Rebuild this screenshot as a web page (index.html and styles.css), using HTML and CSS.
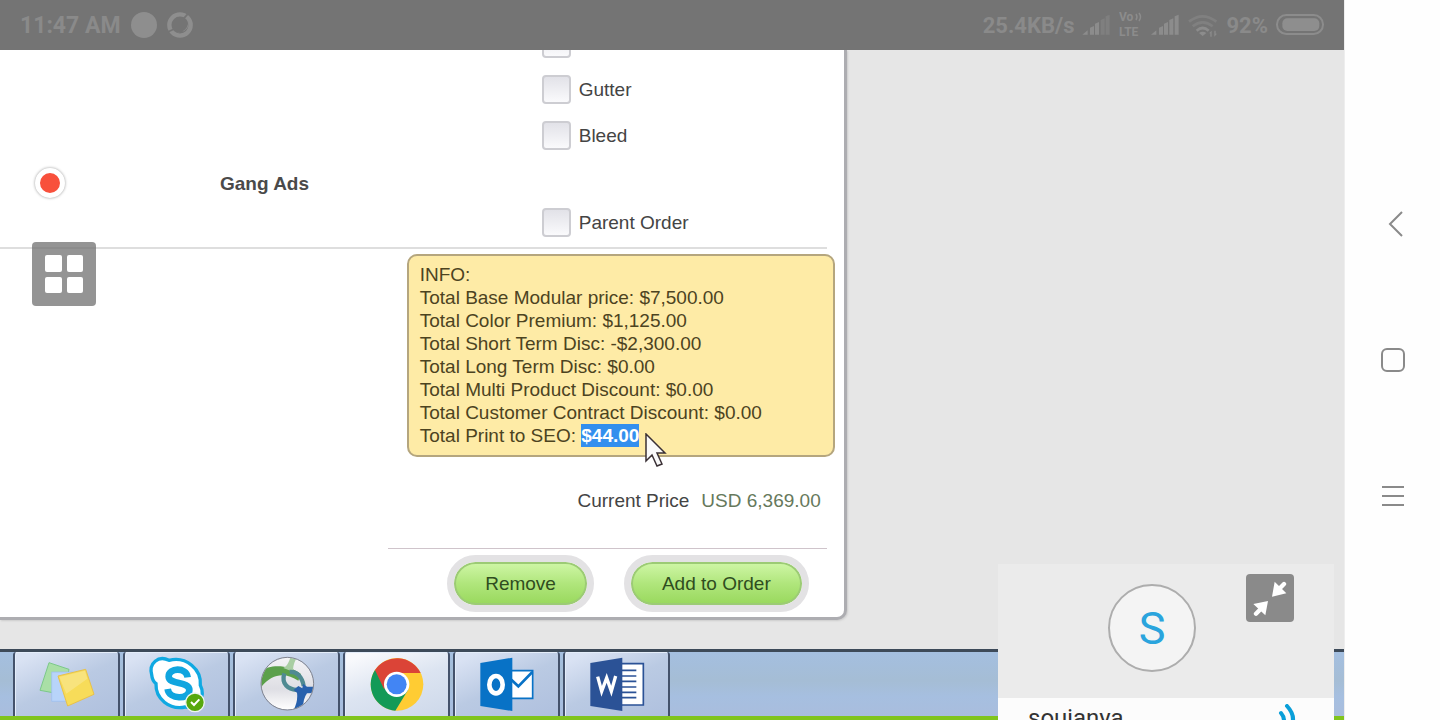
FILE: index.html
```html
<!DOCTYPE html>
<html lang="en">
<head>
<meta charset="utf-8">
<title>Order entry – shared screen</title>
<link rel="stylesheet" href="styles.css">
</head>
<body>
<div class="screen">
  <header class="statusbar">
    <div class="status-group status-left">
      <span>11:47 AM</span>
      <span class="status-dot"></span>
      <svg width="26" height="26" viewBox="498 36 78 78"><circle cx="537" cy="75" r="32" fill="none" stroke="#8e8e8e" stroke-width="13"/><path d="M556 54a28 28 0 0 1-36 40c30 12 56-18 36-40z" fill="#8e8e8e"/><path d="M548 56L562 40M500 96L518 88" stroke="#747474" stroke-width="5"/></svg>
    </div>
    <div class="status-group status-right">
      <span>25.4KB/s</span>
      <svg width="29" height="30" viewBox="357 30 87 90"><g fill="#8c8c8c"><path d="M358 104l16-13v13zM381 83l12-5v26h-12zM396 71l12-5v38h-12z"/><path fill="#7f7f7f" d="M413 60l12-5v49h-12zM428 49l12-5v60h-12z"/></g></svg>
      <svg width="24" height="30" viewBox="0 0 24 30"><text x="0" y="11" class="volte-text">Vo</text><text x="0" y="26" class="volte-text">LTE</text><path d="M17 4q2 3 0 6M20 3q3 4 0 8" fill="none" stroke="#8c8c8c" stroke-width="1.5"/></svg>
      <svg width="29" height="30" viewBox="570 30 87 90"><path fill="#8c8c8c" d="M570 104l16-13v13zM594 83l12-5v26h-12zM609 71l12-5v38h-12zM625 60l12-5v49h-12zM641 49l12-5v60h-12z"/></svg>
      <svg width="30" height="30" viewBox="685 30 90 90"><g fill="none" stroke-width="8"><path d="M688 65q41-32 82 0" stroke="#808080"/><path d="M699 79q30-24 60 0" stroke="#808080"/><path d="M711 92q18-16 36 0" stroke="#8c8c8c"/></g><path d="M718 99q11-8 22 0l-11 9zM748 100l8-8v18h-4v-10zM772 101l-8 9V92h4v9z" fill="#8c8c8c"/></svg>
      <span>92%</span>
      <svg width="48" height="30" viewBox="948 30 144 90"><rect x="951" y="45" width="138" height="57" rx="28" fill="none" stroke="#8c8c8c" stroke-width="6"/><rect x="967" y="55" width="111" height="38" rx="15" fill="#8e8e8e"/></svg>
    </div>
  </header>

  <main class="desktop">
    <form class="panel">
      <div class="options">
        <strong class="option-title">Gang Ads</strong>
        <div class="checks">
          <label class="check"><input type="checkbox" aria-label="Option"></label>
          <label class="check"><input type="checkbox">Gutter</label>
          <label class="check"><input type="checkbox">Bleed</label>
          <label class="check check-last"><input type="checkbox">Parent Order</label>
        </div>
      </div>
      <hr class="rule">
      <section class="info">
        <div>INFO:</div>
        <div>Total Base Modular price: $7,500.00</div>
        <div>Total Color Premium: $1,125.00</div>
        <div>Total Short Term Disc: -$2,300.00</div>
        <div>Total Long Term Disc: $0.00</div>
        <div>Total Multi Product Discount: $0.00</div>
        <div>Total Customer Contract Discount: $0.00</div>
        <div>Total Print to SEO: <span class="selected">$44.00<svg class="cursor" width="24" height="36" viewBox="0 0 24 36"><path d="M1 1v27l6-6 5 11 5-2-5-11h8z" fill="#fafafa" stroke="#3a3035" stroke-width="1.500"/></svg></span></div>
      </section>
      <div class="price"><span>Current Price</span><span class="amount">USD 6,369.00</span></div>
      <div class="actions">
        <button type="button" class="pill">Remove</button>
        <button type="button" class="pill">Add to Order</button>
      </div>
    </form>
  </main>

  <nav class="taskbar" aria-label="Taskbar">
    <button class="task" aria-label="Sticky Notes"><svg viewBox="108 42 180 180"><path d="M144 68l60 20-16 76-71-13z" fill="#a9dfa6" stroke="#7cc98a" stroke-width="3"/><path d="M152 96h65v88h-65z" fill="#b8d4fa" stroke="#9bbcf0" stroke-width="2"/><path d="M171 108l83-20 25 75-79 35z" fill="#f7dc59" stroke="#e8c14b" stroke-width="3"/><path d="M175 111l77-19 7 24-63 45z" fill="#fff" opacity=".22"/></svg></button>
    <button class="task" aria-label="Skype"><svg viewBox="438 42 180 180"><path d="M452 104c-9-34 20-59 52-43 52-13 98 27 94 75 18 35-12 76-45 65-48 10-90-25-88-70-8-6-12-16-13-27z" fill="#fff" stroke="#10a9e2" stroke-width="10"/><path d="M560 112c-4-32-58-29-57-2 1 26 62 12 62 40 0 30-61 29-65-3" fill="none" stroke="#10a5df" stroke-width="20"/><circle cx="582" cy="187" r="28" fill="#57a80d" stroke="#eef5f0" stroke-width="4"/><path d="M570 186l9 9 16-17" fill="none" stroke="#fff" stroke-width="6"/></svg></button>
    <button class="task" aria-label="Cisco AnyConnect"><svg viewBox="768 42 180 180"><defs><clipPath id="globe"><circle cx="859" cy="131" r="78"/></clipPath><linearGradient id="orb" x2="0" y2="1"><stop stop-color="#f4f4f6"/><stop offset=".6" stop-color="#dedee4"/><stop offset="1" stop-color="#fff"/></linearGradient></defs><g clip-path="url(#globe)"><circle cx="859" cy="131" r="78" fill="url(#orb)"/><path d="M774 150v-48c22-32 88-30 126 0l-8 20c-38-24-80-26-118 28z" fill="#5ba04b"/><path d="M847 84c14-7 17-22 23-35h21c-12 15-15 32-15 46z" fill="#a9cea3"/><path d="M850 100c-10 33 12 47 38 50M866 96c22-2 38 16 42 42" fill="none" stroke="#4f8a92" stroke-width="13"/><path d="M872 218q20-28 16-60l-10-8 14-12 12 7 2-14 12 9h22v19l-22 1q-14 18-12 60z" fill="#2861ad"/></g><circle cx="859" cy="131" r="79" fill="none" stroke="#83858f" stroke-width="3"/></svg></button>
    <button class="task task-active" aria-label="Chrome"><svg viewBox="80 42 180 180"><circle cx="170" cy="133" r="79" fill="#fc3"/><path d="M104 90A79 79 0 0 0 165 212l38-62-33-17z" fill="#139a57"/><path d="M104 90a79 79 0 0 1 137 9h-71l-39 48z" fill="#db4437"/><circle cx="169" cy="133" r="38" fill="#fff"/><circle cx="169" cy="133" r="30" fill="#4285f4"/></svg></button>
    <button class="task" aria-label="Outlook"><svg viewBox="410 42 180 180"><path d="M500 92h77v83h-77z" fill="#fff" stroke="#0872c6" stroke-width="5"/><path d="M513 119l21 20 42-43" fill="none" stroke="#0872c6" stroke-width="8"/><path d="M420 69l96-16v160l-96-15z" fill="#0872c6"/><ellipse cx="467" cy="134" rx="20" ry="26" fill="none" stroke="#fff" stroke-width="14"/></svg></button>
    <button class="task" aria-label="Word"><svg viewBox="740 42 180 180"><path d="M835 71h74v124h-74z" fill="#fff" stroke="#2b5296" stroke-width="5"/><path d="M844 91h44M844 108h44M844 124h44M844 141h44M844 157h44M844 173h44" stroke="#2b5296" stroke-width="5"/><path d="M750 69l96-16v160l-96-15z" fill="#2b5296"/><path d="M772 110l12 44 15-40 14 40 13-46" fill="none" stroke="#fff" stroke-width="10"/></svg></button>
  </nav>

  <button class="record" aria-label="Recording"></button>
  <button class="tile" aria-label="Gallery view"><span></span><span></span><span></span><span></span></button>

  <aside class="caller">
    <div class="caller-head">
      <div class="avatar">S</div>
      <button class="collapse" aria-label="Collapse"><svg width="48" height="48" viewBox="798 72 144 144"><g fill="#fff" stroke="#fff"><path d="M876 140l8-45 35 35zM864 153l-8 43-36-34z" stroke="none"/><path d="M895 119l17-17M845 174l-17 17" stroke-width="13" stroke-linecap="round"/></g></svg></button>
    </div>
    <div class="caller-name"><span>soujanya</span>
      <svg width="18" height="28" viewBox="0 0 18 28"><path d="M3 9q6 7 0 15M9 2q12 13 0 26" fill="none" stroke="#0a9fd9" stroke-width="4" stroke-linecap="round"/></svg>
    </div>
  </aside>
</div>

<nav class="keys" aria-label="System keys">
  <button aria-label="Back"><svg width="30" height="30" viewBox="0 0 30 30"><path d="M24 3L12 15l12 12"/></svg></button>
  <button aria-label="Home"><svg width="30" height="30" viewBox="0 0 30 30"><rect x="4" y="4" width="22" height="22" rx="5"/></svg></button>
  <button aria-label="Recents"><svg width="30" height="30" viewBox="0 0 30 30"><path d="M4 6h22M4 15h22M4 24h22"/></svg></button>
</nav>
</body>
</html>
```

FILE: styles.css
```css
* { box-sizing: border-box; }

body {
  margin: 0;
  display: flex;
  height: 100vh;
  overflow: hidden;
  background: #fefefe;
  font-family: "Liberation Sans", Arial, sans-serif;
  font-size: 19px;
  line-height: 23px;
  color: #444;
}

button {
  padding: 0;
  border: 0;
  background: none;
  font: inherit;
  color: inherit;
}

svg { display: block; }

.screen {
  position: relative;
  flex: 1;
  min-width: 0;
  display: flex;
  flex-direction: column;
  overflow: hidden;
  background: #e6e6e6;
}

/* Phone status bar */
.statusbar {
  flex: none;
  z-index: 1;
  height: 50px;
  padding: 0 20px;
  display: flex;
  align-items: center;
  justify-content: space-between;
  background: #747474;
  color: #8a8a8a;
  font: bold 22px/30px Roboto, sans-serif;
}
.status-group { display: flex; align-items: center; }
.status-group span { padding-top: 2px; }
.status-left { gap: 10px; font-size: 23px; }
.status-right { gap: 8px; }
.status-dot { width: 26px; height: 26px; border-radius: 50%; background: #8e8e8e; }
.volte-text { font: bold 12px Roboto, sans-serif; fill: #8c8c8c; }

/* Order form */
.desktop { flex: 1; min-height: 0; }
.panel {
  width: 63%;
  background: #fff;
  border: solid #adadb1;
  border-width: 0 3px 3px 0;
  border-bottom-right-radius: 10px;
  box-shadow: 1px 1px 2px #ccc;
}
.options {
  display: flex;
  align-items: center;
  justify-content: space-between;
  padding: 0 112px 0 220px;
}
.option-title { padding-top: 72px; color: #4a4a4a; }
.checks { width: 190px; margin-top: -30px; }
.check { display: flex; align-items: center; gap: 8px; height: 46px; }
.check-last { margin-top: 41px; }
.check input {
  appearance: none;
  width: 29px;
  height: 29px;
  margin: 0;
  border: 2px solid #cdcdd2;
  border-radius: 4px;
  background: linear-gradient(#e2e2e8, #fafafc);
}
.rule { margin: 2px 17px 5px 0; border: 0; border-top: 2px solid #dedede; }
.info {
  width: 428px;
  margin: 0 9px 0 auto;
  padding: 7px 11px 8px;
  border: 2px solid #b5a67e;
  border-radius: 10px;
  background: #feeba6;
  color: #4c431f;
}
.selected { position: relative; display: inline-block; background: #338fee; color: #fff; font-weight: bold; }
.cursor { position: absolute; top: 9px; left: 100%; margin-left: 6px; }
.price {
  display: flex;
  justify-content: flex-end;
  gap: 12px;
  padding: 32px 23px 36px 0;
}
.amount { color: #66795c; }
.actions {
  width: 439px;
  margin: 0 17px 0 auto;
  padding: 6px 18px 5px;
  border-top: 1px solid #cfc4cb;
  display: flex;
  justify-content: flex-end;
  gap: 30px;
}
.pill {
  height: 57px;
  padding: 0 31px;
  border: 7px solid #e3e2e4;
  border-radius: 29px;
  background: linear-gradient(#d0f7a8, #b0e67c 50%, #98d85c) padding-box;
  box-shadow: inset 0 0 0 2px #9ccb75;
  color: #2f4d20;
}

/* Windows taskbar */
.taskbar {
  flex: none;
  height: 71px;
  padding-left: 13px;
  display: flex;
  gap: 3px;
  border-top: 3px solid #3d4a59;
  border-bottom: 4px solid #80c41c;
  background: linear-gradient(#a4bfe0, #a5bdd5 45%, #a6bfe0 70%, #a9bddd);
}
.task {
  width: 107px;
  display: flex;
  align-items: center;
  justify-content: center;
  border: solid #44526b;
  border-width: 0 2px;
  border-radius: 3px 3px 0 0;
  background: linear-gradient(155deg, #d9e2f3 10%, #bacae3 50%, #afc0de);
  box-shadow: inset 1px 1px 0 #e4edfa;
}
.task-active { background: linear-gradient(160deg, #f8f9fc 10%, #dce4f1 50%, #cdd8ea); }
.task svg { width: 60px; height: 60px; }

/* Floating meeting controls */
.record {
  position: absolute;
  top: 168px;
  left: 35px;
  width: 30px;
  height: 30px;
  border: 5px solid #fff;
  border-radius: 50%;
  background: #f8503c;
  box-shadow: 0 0 3px #999;
}
.tile {
  position: absolute;
  top: 242px;
  left: 32px;
  width: 64px;
  height: 64px;
  padding: 13px;
  display: grid;
  grid-template-columns: 1fr 1fr;
  gap: 5px;
  border-radius: 4px;
  background: rgba(112, 112, 112, 0.75);
}
.tile span { border-radius: 2px; background: #fff; }

.caller {
  position: absolute;
  right: 10px;
  top: 564px;
  width: 336px;
  background: #fcfcfc;
}
.caller-head { position: relative; padding: 20px 110px 26px; background: #ebebeb; }
.avatar {
  width: 88px;
  height: 88px;
  border: 2px solid #adadad;
  border-radius: 50%;
  background: #f4f4f4;
  color: #2aa4dd;
  font: 45px/86px Roboto, sans-serif;
  text-align: center;
}
.collapse {
  position: absolute;
  top: 10px;
  right: 40px;
  border-radius: 4px;
  background: #8a8a8a;
}
.caller-name {
  display: flex;
  justify-content: space-between;
  padding: 6px 38px 6px 30px;
  color: #333;
  font: 24px/28px Roboto, sans-serif;
}

/* Phone navigation keys */
.keys {
  flex: none;
  width: 96px;
  border-left: 1px solid #eee;
  display: flex;
  flex-direction: column;
  align-items: center;
  justify-content: center;
  gap: 106px;
}
.keys svg { fill: none; stroke: #8a8a8a; stroke-width: 2; }
```
